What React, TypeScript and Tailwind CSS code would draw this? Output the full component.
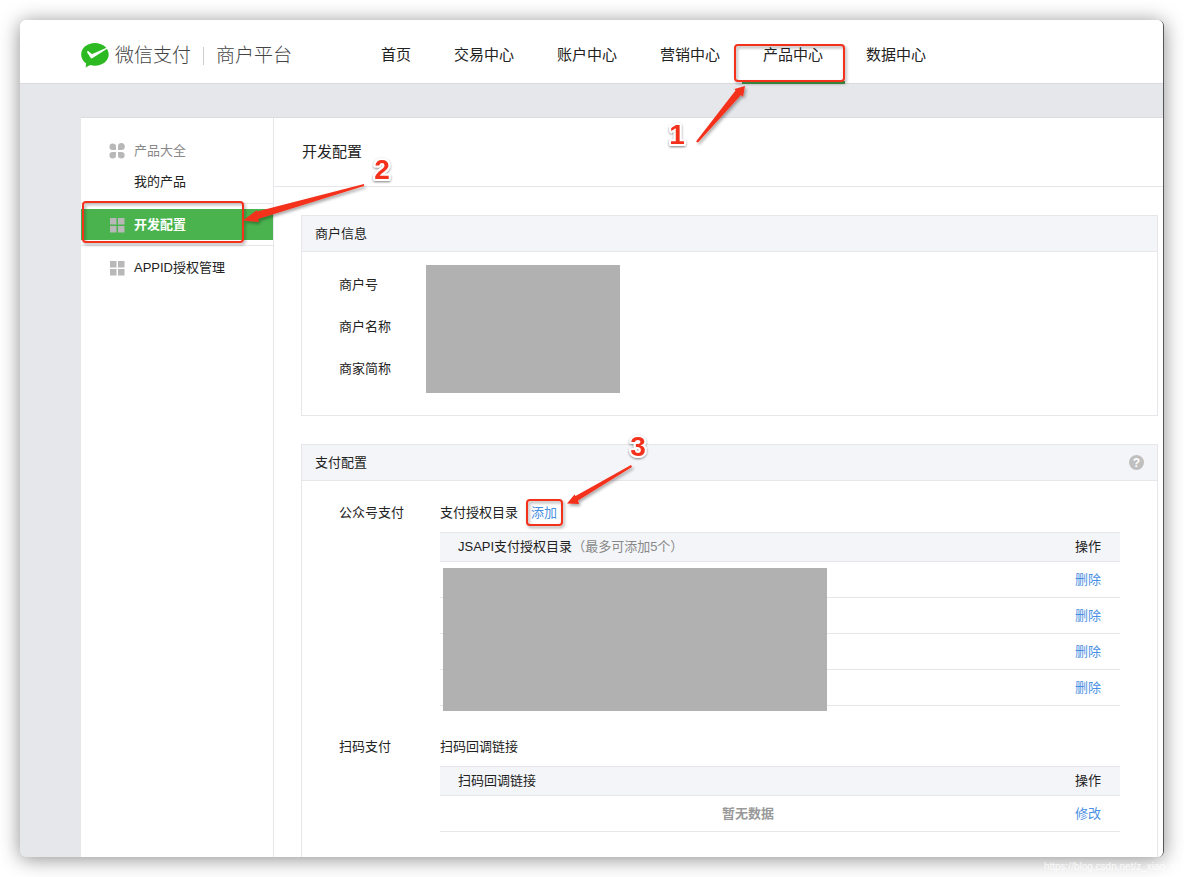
import { ReactNode } from 'react'
import clsx from 'clsx'

const NAV_ITEMS = ['首页', '交易中心', '账户中心', '营销中心', '产品中心', '数据中心']
const MERCHANT_FIELDS = ['商户号', '商户名称', '商家简称']
const AUTH_DIRECTORIES = [1, 2, 3, 4]

const Logo = () => (
  <svg width="28" height="25" viewBox="0 0 28 25" aria-hidden="true">
    <path
      fill="#2cb922"
      d="M14 0C6.2 0 .2 5 .2 11.600c0 3.700 1.800 6.800 5 9L4.600 24.600l4.600-2.500c1.500.4 3.100.6 4.800.6 7.700 0 13.700-5 13.700-11.200C27.700 5 21.700 0 14 0z"
    />
    <path
      fill="#fff"
      d="M6.500 8.200c.8-.5 1.600.5 3.600 2.400.5.400 1 .400 1.700.100L25.600 4.700c.8-.2 1.200.6.500 1L11.600 15c-1 .7-1.700.6-2.200-.4L6.200 9.400c-.300-.5-.2-1 .3-1.200z"
    />
  </svg>
)

const IconProducts = () => (
  <svg width="16" height="16" viewBox="0 0 16 16" fill="#b8b8b8" aria-hidden="true">
    <path d="M3.700 0.500a3.300 3.300 0 0 1 3.300 3.300V7H3.700a3.250 3.250 0 0 1 0-6.500z" />
    <path d="M12.300 0a3.500 3.500 0 0 1 0 7H9V3.500A3.400 3.400 0 0 1 12.300 0z" />
    <path d="M3.700 9H7v3.300A3.300 3.300 0 1 1 3.700 9z" />
    <path d="M9 9h3.300A3.300 3.300 0 1 1 9 12.300z" />
  </svg>
)

const IconGrid = () => (
  <svg width="16" height="16" viewBox="0 0 16 16" fill="#b8b8b8" aria-hidden="true">
    <path d="M1 1h6.500v6.500H1zM9 1h6.500v6.500H9zM1 9h6.500v6.500H1zM9 9h6.500v6.500H9z" />
  </svg>
)

const SidebarItem = ({
  label,
  icon,
  active,
  muted,
}: {
  label: string
  icon?: ReactNode
  active?: boolean
  muted?: boolean
}) => (
  <a
    href="#"
    className={clsx(
      'flex h-[31px] items-center pl-7',
      active && 'bg-[#4ab34e] font-bold text-white',
      muted && 'text-[#888]'
    )}
  >
    <span className="w-[25px] shrink-0">{icon}</span>
    {label}
  </a>
)

const Panel = ({
  title,
  action,
  className,
  children,
}: {
  title: string
  action?: ReactNode
  className?: string
  children: ReactNode
}) => (
  <section className={clsx('border border-[#e7e7eb]', className)}>
    <div className="flex h-9 items-center justify-between border-b border-[#e7e7eb] bg-[#f4f5f9] px-[13px]">
      <h2>{title}</h2>
      {action}
    </div>
    {children}
  </section>
)

const ConfigTable = ({ heading, children }: { heading: ReactNode; children: ReactNode }) => (
  <table className="w-full border-collapse">
    <thead>
      <tr className="h-[29px] border-y border-[#e7e7eb] bg-[#f4f5f9]">
        <th className="pl-[18px] text-left font-normal">{heading}</th>
        <th className="w-16 text-center font-normal">操作</th>
      </tr>
    </thead>
    <tbody>{children}</tbody>
  </table>
)

const Annotations = () => (
  <svg
    className="pointer-events-none absolute top-0 left-0"
    width="900"
    height="560"
    viewBox="0 0 900 560"
    aria-hidden="true"
  >
    <defs>
      <filter id="drop" x="-20%" y="-20%" width="150%" height="150%">
        <feDropShadow dx="1.500" dy="2" stdDeviation="1.500" floodColor="#000" floodOpacity="0.35" />
      </filter>
      <filter id="halo" x="-20%" y="-20%" width="150%" height="150%">
        <feDropShadow dx="0" dy="1" stdDeviation="1" floodColor="#000" floodOpacity="0.5" />
      </filter>
    </defs>
    <g fill="none" stroke="#f4311f" strokeWidth="2" filter="url(#drop)">
      <rect x="735" y="45" width="109" height="36" rx="3" />
      <rect x="83" y="202" width="160" height="40" rx="3" />
      <rect x="527" y="500" width="35" height="25" rx="3" />
    </g>
    <g fill="#f4311f" filter="url(#drop)">
      <path d="M696 141.500L735.500 90.500L734.500 89L745 86L743 97L741 95L698 142.500z" />
      <path d="M364 184L257 211.500L257 210L243 220.500L259 222L258 219L364 186z" />
      <path d="M631 465L575.500 496L574.500 494.500L567 503.500L579 504L578 500.500L632 467z" />
    </g>
    <g
      fill="#f4311f"
      stroke="#fff"
      strokeWidth="4"
      strokeLinejoin="round"
      paintOrder="stroke"
      fontSize="28"
      fontWeight="700"
      textAnchor="middle"
      fontFamily="'Liberation Sans', sans-serif"
      filter="url(#halo)"
    >
      <text x="677" y="144">1</text>
      <text x="382" y="179">2</text>
      <text x="638" y="456">3</text>
    </g>
  </svg>
)

const App = () => {
  return (
    <div className="relative flex min-h-screen bg-white p-5 font-['Liberation_Sans','Noto_Sans_CJK_SC',sans-serif] text-[13px] leading-5 text-[#222]">
      <div className="flex grow flex-col overflow-hidden rounded-md border-r border-[#555] bg-[#e6e7eb] shadow-[0_2px_20px_rgba(0,0,0,0.45)]">
        <header className="flex h-16 items-stretch border-b border-[#d9dadc] bg-white pl-[61px]">
          <div className="flex w-[279px] items-center pt-2 text-[19px] font-light text-[#444]">
            <Logo />
            <span className="ml-1.5">微信支付</span>
            <span className="mx-3 h-[18px] w-px bg-[#ccc]" />
            <span>商户平台</span>
          </div>
          <nav className="-mb-px flex text-[15px]">
            {NAV_ITEMS.map((item) => (
              <a
                key={item}
                href="#"
                className={clsx(
                  'flex items-center border-b-3 pt-2 pr-[22px] pl-[21px] whitespace-nowrap',
                  item === '产品中心' ? 'border-[#459c4b]' : 'border-transparent'
                )}
              >
                {item}
              </a>
            ))}
          </nav>
        </header>

        <div className="mt-[33px] ml-[61px] flex grow border-t border-[#dcdde0] bg-white">
          <aside className="w-[193px] shrink-0 border-r border-[#e7e7eb] pt-[17px]">
            <div className="border-b border-[#e7e7eb] pb-1.5">
              <SidebarItem label="产品大全" icon={<IconProducts />} muted />
              <SidebarItem label="我的产品" />
            </div>
            <div className="border-b border-[#e7e7eb] py-[5px]">
              <SidebarItem label="开发配置" icon={<IconGrid />} active />
            </div>
            <div className="py-1.5">
              <SidebarItem label="APPID授权管理" icon={<IconGrid />} />
            </div>
          </aside>

          <main className="flex grow flex-col">
            <h1 className="flex h-[69px] items-center border-b border-[#e7e7eb] pl-7 text-[15px]">
              开发配置
            </h1>
            <div className="flex grow flex-col gap-7 pt-7 pr-[5px] pl-[27px]">
              <Panel title="商户信息">
                <div className="flex px-[37px] pt-3 pb-[22px]">
                  <dl className="w-[87px]">
                    {MERCHANT_FIELDS.map((field) => (
                      <dt key={field} className="flex h-[42px] items-center">
                        {field}
                      </dt>
                    ))}
                  </dl>
                  <div className="mt-px h-32 w-[194px] bg-[#b1b1b1]" />
                </div>
              </Panel>

              <Panel
                title="支付配置"
                className="grow border-b-0"
                action={
                  <button
                    type="button"
                    aria-label="帮助"
                    className="flex size-[15px] items-center justify-center rounded-full bg-[#bfbfbf] text-xs font-bold text-white"
                  >
                    ?
                  </button>
                }
              >
                <div className="flex px-[37px] pt-[22px]">
                  <h3 className="w-[101px] shrink-0">公众号支付</h3>
                  <div className="grow">
                    <div className="mb-[9px] flex gap-[13px]">
                      <span>支付授权目录</span>
                      <a href="#" className="text-[#4a90e2]">
                        添加
                      </a>
                    </div>
                    <div className="relative">
                      <ConfigTable
                        heading={
                          <>
                            JSAPI支付授权目录<span className="text-[#888]">（最多可添加5个）</span>
                          </>
                        }
                      >
                        {AUTH_DIRECTORIES.map((id) => (
                          <tr key={id} className="h-9 border-b border-[#e7e7eb]">
                            <td />
                            <td className="text-center">
                              <a href="#" className="text-[#4a90e2]">
                                删除
                              </a>
                            </td>
                          </tr>
                        ))}
                      </ConfigTable>
                      <div className="absolute top-9 left-[3px] h-[143px] w-96 bg-[#b1b1b1]" />
                    </div>
                  </div>
                </div>

                <div className="flex px-[37px] pt-[31px] pb-[25px]">
                  <h3 className="w-[101px] shrink-0">扫码支付</h3>
                  <div className="grow">
                    <p className="mb-[9px]">扫码回调链接</p>
                    <ConfigTable heading="扫码回调链接">
                      <tr className="h-9 border-b border-[#e7e7eb]">
                        <td className="text-center font-bold text-[#999]">暂无数据</td>
                        <td className="text-center">
                          <a href="#" className="text-[#4a90e2]">
                            修改
                          </a>
                        </td>
                      </tr>
                    </ConfigTable>
                  </div>
                </div>
              </Panel>
            </div>
          </main>
        </div>
      </div>
      <Annotations />
      <span className="absolute right-0 bottom-0 text-[10px] whitespace-nowrap text-white/80">
        https://blog.csdn.net/z_xiao_qia
      </span>
    </div>
  )
}

export default App
